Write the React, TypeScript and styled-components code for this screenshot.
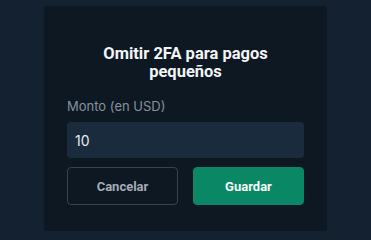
import React, { useState } from "react";
import styled, { createGlobalStyle } from "styled-components";

const GlobalStyle = createGlobalStyle`
  html, body {
    margin: 0;
    padding: 0;
    background: #132130;
    font-family: Inter, "Noto Sans", sans-serif;
  }
`;

const Screen = styled.div`
  width: 371px;
  height: 236px;
  display: flex;
  justify-content: center;
  padding-top: 6px;
  box-sizing: border-box;
`;

const Dialog = styled.div`
  width: 283px;
  height: 225px;
  box-sizing: border-box;
  padding: 39px 23px 0;
  background: #0d1822;
  border-radius: 3px;
  display: flex;
  flex-direction: column;
`;

const Title = styled.h2`
  margin: 0;
  font-family: Roboto, "Liberation Sans", sans-serif;
  font-size: 16.5px;
  line-height: 18px;
  font-weight: 700;
  color: #f3f5f7;
  text-align: center;
`;

const Label = styled.label`
  margin-top: 17px;
  font-size: 13px;
  line-height: 16px;
  color: #8592a0;
`;

const Input = styled.input`
  margin-top: 8px;
  height: 36px;
  box-sizing: border-box;
  border: none;
  outline: none;
  border-radius: 4px;
  background: #1a2b3d;
  padding: 0 8px;
  font-family: Inter, sans-serif;
  font-size: 14px;
  color: #e8ecef;
`;

const Actions = styled.div`
  margin-top: 9px;
  display: grid;
  grid-template-columns: 1fr 1fr;
  gap: 15px;
`;

const Button = styled.button<{ $primary?: boolean }>`
  height: 38px;
  border-radius: 4px;
  font-family: Roboto, "Liberation Sans", sans-serif;
  font-size: 13px;
  font-weight: 700;
  cursor: pointer;
  background: ${({ $primary }) => ($primary ? "#0a8866" : "transparent")};
  color: ${({ $primary }) => ($primary ? "#f4fbf8" : "#a4adb6")};
  border: 1px solid ${({ $primary }) => ($primary ? "#0a8866" : "#37424d")};
`;

export default function App() {
  const [amount, setAmount] = useState("10");
  return (
    <>
      <GlobalStyle />
      <Screen>
        <Dialog>
          <Title>
            Omitir 2FA para pagos
            <br />
            pequeños
          </Title>
          <Label htmlFor="amount">Monto (en USD)</Label>
          <Input
            id="amount"
            value={amount}
            onChange={(e) => setAmount(e.target.value)}
          />
          <Actions>
            <Button>Cancelar</Button>
            <Button $primary>Guardar</Button>
          </Actions>
        </Dialog>
      </Screen>
    </>
  );
}
